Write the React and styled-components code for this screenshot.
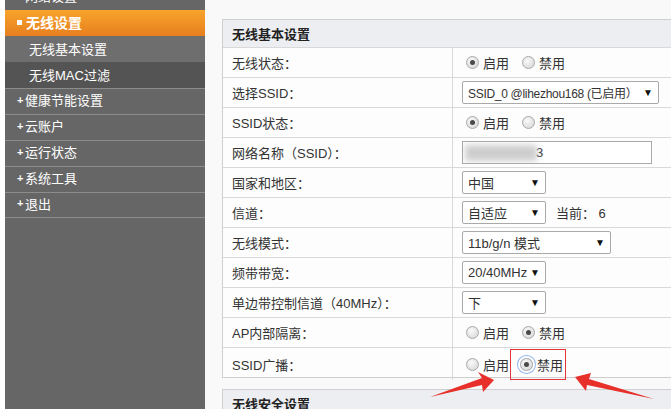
import React from "react";
import styled, { createGlobalStyle } from "styled-components";

const GlobalStyle = createGlobalStyle`
  html, body {
    margin: 0;
    padding: 0;
    width: 671px;
    height: 409px;
    overflow: hidden;
    background: #ffffff;
  }
  body {
    font-family: "Liberation Sans", "Noto Sans CJK SC", sans-serif;
    font-size: 13px;
    color: #333;
  }
`;

const MENU = [
  { text: "网络设置", kind: "main" },
  { text: "无线设置", kind: "active" },
  { text: "无线基本设置", kind: "sub", tone: "light" },
  { text: "无线MAC过滤", kind: "sub", tone: "dark" },
  { text: "健康节能设置", kind: "main" },
  { text: "云账户", kind: "main" },
  { text: "运行状态", kind: "main" },
  { text: "系统工具", kind: "main" },
  { text: "退出", kind: "main" },
];

const Radio = ({ checked, focus }) => (
  <RadioRing $focus={focus}>
    <RadioDot $checked={checked} />
  </RadioRing>
);

const RadioPair = ({ value, mark }) => (
  <Options>
    <Option>
      <Radio checked={value === "on"} />
      <span>启用</span>
    </Option>
    {mark ? (
      <Marked>
        <Radio checked={value === "off"} focus />
        <span>禁用</span>
      </Marked>
    ) : (
      <Option>
        <Radio checked={value === "off"} />
        <span>禁用</span>
      </Option>
    )}
  </Options>
);

const Select = ({ width, tight, children }) => (
  <SelectBox $width={width} $tight={tight}>
    <span>{children}</span>
    <Caret>▼</Caret>
  </SelectBox>
);

const App = () => {
  return (
    <>
      <GlobalStyle />
      <Page>
        <Sidebar>
          {MENU.map((m) => (
            <MenuItem key={m.text} $kind={m.kind} $tone={m.tone}>
              {m.kind === "active" && <Square />}
              {m.kind === "main" && <Plus>+</Plus>}
              {m.text}
            </MenuItem>
          ))}
        </Sidebar>
        <Content>
          <Panel>
            <PanelHead>无线基本设置</PanelHead>
            <Row>
              <Label>无线状态：</Label>
              <Value>
                <RadioPair value="on" />
              </Value>
            </Row>
            <Row>
              <Label>选择SSID：</Label>
              <Value>
                <Select width={197} tight>
                  SSID_0 @lihezhou168 (已启用）
                </Select>
              </Value>
            </Row>
            <Row>
              <Label>SSID状态：</Label>
              <Value>
                <RadioPair value="on" />
              </Value>
            </Row>
            <Row>
              <Label>网络名称（SSID）：</Label>
              <Value>
                <TextInput>
                  <Blur />
                  <span>3</span>
                </TextInput>
              </Value>
            </Row>
            <Row>
              <Label>国家和地区：</Label>
              <Value>
                <Select width={84}>中国</Select>
              </Value>
            </Row>
            <Row>
              <Label>信道：</Label>
              <Value>
                <Select width={84}>自适应</Select>
                <Current>当前：&nbsp;6</Current>
              </Value>
            </Row>
            <Row>
              <Label>无线模式：</Label>
              <Value>
                <Select width={149}>11b/g/n 模式</Select>
              </Value>
            </Row>
            <Row>
              <Label>频带带宽：</Label>
              <Value>
                <Select width={84}>20/40MHz</Select>
              </Value>
            </Row>
            <Row>
              <Label>单边带控制信道（40MHz）：</Label>
              <Value>
                <Select width={84}>下</Select>
              </Value>
            </Row>
            <Row>
              <Label>AP内部隔离：</Label>
              <Value>
                <RadioPair value="off" />
              </Value>
            </Row>
            <Row>
              <Label>SSID广播：</Label>
              <Value>
                <RadioPair value="off" mark />
              </Value>
            </Row>
          </Panel>
          <NextPanel>
            <PanelHead>无线安全设置</PanelHead>
          </NextPanel>
        </Content>
        <Arrows width="671" height="409" viewBox="0 0 671 409">
          <path d="M430 397 L482 378 L478 372 L494 380 L483 392 L482 385 Z" fill="#e8302a" />
          <path d="M654 399 L589 379 L591 373 L575 377 L586 391 L587 385 Z" fill="#e8302a" />
        </Arrows>
      </Page>
    </>
  );
};

const Page = styled.div`
  position: relative;
  display: flex;
  width: 671px;
  height: 409px;
  padding-left: 5px;
  box-sizing: border-box;
  background: #fff;
`;

const Sidebar = styled.nav`
  width: 200px;
  flex-shrink: 0;
  height: 409px;
  background: #666666;
  overflow: hidden;
  display: flex;
  flex-direction: column;
  & > :first-child {
    margin-top: -16px;
  }
  & > :last-child {
    border-bottom: 1px solid #8c8c8c;
  }
`;

const MenuItem = styled.div`
  display: flex;
  align-items: center;
  box-sizing: border-box;
  height: 26px;
  color: #fff;
  font-size: ${(p) => (p.$kind === "active" ? "14px" : "13px")};
  font-weight: ${(p) => (p.$kind === "active" ? "bold" : "normal")};
  padding-left: ${(p) => (p.$kind === "sub" ? "24px" : "12px")};
  padding-bottom: ${(p) => (p.$kind === "main" ? "4px" : "2px")};
  border-top: ${(p) => (p.$kind === "main" ? "1px solid #8c8c8c" : "none")};
  background: ${(p) =>
    p.$kind === "active"
      ? "linear-gradient(to bottom, #f8a42c, #e67f1f)"
      : p.$kind === "sub"
      ? p.$tone === "light"
        ? "#6e6e6e"
        : "#545454"
      : "#666666"};
  white-space: nowrap;
`;

const Square = styled.span`
  display: inline-block;
  width: 5px;
  height: 5px;
  background: #fff;
  margin-right: 4px;
`;

const Plus = styled.span`
  display: inline-block;
  width: 7px;
  font-size: 11px;
  font-weight: bold;
  margin-right: 1px;
`;

const Content = styled.main`
  flex: 1;
  background: #f9f9f9;
  padding: 19px 0 0 17px;
  overflow: hidden;
  min-width: 0;
`;

const Panel = styled.section`
  width: 470px;
  border: 1px solid #cfcfcf;
  background: #fdfdfd;
`;

const NextPanel = styled(Panel)`
  margin-top: 11px;
  height: 40px;
`;

const PanelHead = styled.div`
  height: 27px;
  display: flex;
  align-items: center;
  padding-left: 9px;
  background: #eceef2;
  font-weight: bold;
  font-size: 13px;
  color: #222;
`;

const Row = styled.div`
  display: grid;
  grid-template-columns: 230px 1fr;
  height: 29px;
  border-top: 1px solid #d9d9d9;
`;

const Label = styled.div`
  display: flex;
  align-items: center;
  padding-left: 9px;
  border-right: 1px solid #d9d9d9;
  white-space: nowrap;
`;

const Value = styled.div`
  display: flex;
  align-items: center;
  padding-left: 9px;
`;

const Options = styled.div`
  display: flex;
  align-items: center;
  margin-left: 4px;
  gap: 13px;
`;

const Option = styled.label`
  display: flex;
  align-items: center;
  gap: 4px;
`;

const Marked = styled(Option)`
  height: 31px;
  margin: 1px 0 0 -12px;
  padding: 0 2px 0 9px;
  border: 1px solid #e0363a;
  box-sizing: border-box;
`;

const RadioRing = styled.span`
  display: inline-flex;
  align-items: center;
  justify-content: center;
  width: 11px;
  height: 11px;
  border-radius: 50%;
  border: 1px solid #a9a9a9;
  background: radial-gradient(circle at 40% 35%, #fafafa, #d2d2d2);
  box-shadow: ${(p) => (p.$focus ? "0 0 0 2px #fff, 0 0 0 3px #8fb4f0" : "none")};
`;

const RadioDot = styled.span`
  width: 5px;
  height: 5px;
  border-radius: 50%;
  background: ${(p) => (p.$checked ? "#4a4a4a" : "transparent")};
`;

const SelectBox = styled.div`
  width: ${(p) => p.$width}px;
  height: 23px;
  box-sizing: border-box;
  border: 1px solid #a9a9a9;
  border-radius: 2px;
  background: #fff;
  display: flex;
  align-items: center;
  justify-content: space-between;
  padding: 0 5px 0 5px;
  white-space: nowrap;
  font-size: ${(p) => (p.$tight ? "12px" : "13px")};
  letter-spacing: ${(p) => (p.$tight ? "-0.3px" : "0")};
`;

const Caret = styled.span`
  font-size: 10px;
  color: #111;
  letter-spacing: 0;
`;

const Current = styled.span`
  margin-left: 10px;
`;

const TextInput = styled.div`
  width: 190px;
  height: 23px;
  box-sizing: border-box;
  border: 1px solid #a9a9a9;
  background: #fff;
  display: flex;
  align-items: center;
  overflow: hidden;
  padding-left: 2px;
`;

const Blur = styled.span`
  width: 72px;
  height: 16px;
  background: #cdcdcd;
  filter: blur(3px);
  margin-right: -1px;
`;

const Arrows = styled.svg`
  position: absolute;
  left: 0;
  top: 0;
  pointer-events: none;
`;

export default App;
